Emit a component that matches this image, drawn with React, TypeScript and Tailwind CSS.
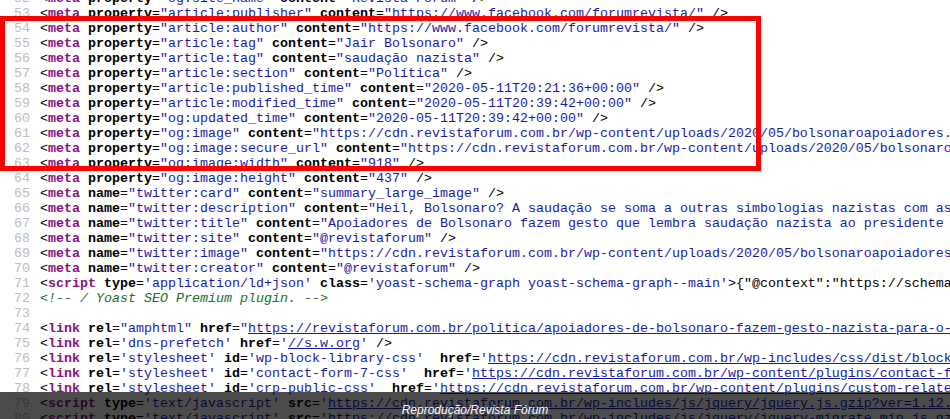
type Kind = 'p' | 't' | 'a' | 'v' | 'l' | 'c';
type Seg = [string, Kind];
type Attr = { k: string; v: string; link?: boolean; gap?: string };

const styles: Record<Kind, string> = {
  p: 'text-black',
  t: 'font-bold text-[#881280]',
  a: 'font-bold text-black',
  v: 'text-[#1a1aa6]',
  l: 'text-[#1a1aa6] underline',
  c: 'italic text-[#236e25]',
};

function tag(name: string, attrs: Attr[], q: string, end: Seg[] = [[' />', 'p']]): Seg[] {
  const out: Seg[] = [['<', 'p'], [name, 't']];
  attrs.forEach((a) => {
    out.push([a.gap ?? ' ', 'p'], [a.k, 'a'], ['=', 'p']);
    if (a.link) {
      out.push([q, 'v'], [a.v, 'l'], [q, 'v']);
    } else {
      out.push([q + a.v + q, 'v']);
    }
  });
  return out.concat(end);
}

const meta = (key: string, name: string, content: string) =>
  tag('meta', [{ k: key, v: name }, { k: 'content', v: content }], '"');

const cdn = 'https://cdn.revistaforum.com.br';
const scriptEnd: Seg[] = [['>', 'p'], ['</', 'p'], ['script', 't'], ['>', 'p']];

const lines: Seg[][] = [
  meta('property', 'og:site_name', 'Revista Fórum'),
  meta('property', 'article:publisher', 'https://www.facebook.com/forumrevista/'),
  meta('property', 'article:author', 'https://www.facebook.com/forumrevista/'),
  meta('property', 'article:tag', 'Jair Bolsonaro'),
  meta('property', 'article:tag', 'saudação nazista'),
  meta('property', 'article:section', 'Política'),
  meta('property', 'article:published_time', '2020-05-11T20:21:36+00:00'),
  meta('property', 'article:modified_time', '2020-05-11T20:39:42+00:00'),
  meta('property', 'og:updated_time', '2020-05-11T20:39:42+00:00'),
  meta('property', 'og:image', `${cdn}/wp-content/uploads/2020/05/bolsonaroapoiadores.jpg`),
  meta('property', 'og:image:secure_url', `${cdn}/wp-content/uploads/2020/05/bolsonaroapoiadores.jpg`),
  meta('property', 'og:image:width', '918'),
  meta('property', 'og:image:height', '437'),
  meta('name', 'twitter:card', 'summary_large_image'),
  meta(
    'name',
    'twitter:description',
    'Heil, Bolsonaro? A saudação se soma a outras simbologias nazistas com as quais o governo flerta',
  ),
  meta(
    'name',
    'twitter:title',
    'Apoiadores de Bolsonaro fazem gesto que lembra saudação nazista ao presidente em ato em Brasília',
  ),
  meta('name', 'twitter:site', '@revistaforum'),
  meta('name', 'twitter:image', `${cdn}/wp-content/uploads/2020/05/bolsonaroapoiadores.jpg`),
  meta('name', 'twitter:creator', '@revistaforum'),
  tag(
    'script',
    [
      { k: 'type', v: 'application/ld+json' },
      { k: 'class', v: 'yoast-schema-graph yoast-schema-graph--main' },
    ],
    "'",
    [
      ['>', 'p'],
      ['{"@context":"https://schema.org","@graph":[{"@type":"Organization"', 'p'],
    ],
  ),
  [['<!-- / Yoast SEO Premium plugin. -->', 'c']],
  [],
  tag(
    'link',
    [
      { k: 'rel', v: 'amphtml' },
      {
        k: 'href',
        v: 'https://revistaforum.com.br/politica/apoiadores-de-bolsonaro-fazem-gesto-nazista-para-o-presidente/amp/',
        link: true,
      },
    ],
    '"',
  ),
  tag('link', [{ k: 'rel', v: 'dns-prefetch' }, { k: 'href', v: '//s.w.org', link: true }], "'"),
  tag(
    'link',
    [
      { k: 'rel', v: 'stylesheet' },
      { k: 'id', v: 'wp-block-library-css' },
      { k: 'href', v: `${cdn}/wp-includes/css/dist/block-library/style.min.css?ver=5.4.1`, link: true, gap: '  ' },
    ],
    "'",
  ),
  tag(
    'link',
    [
      { k: 'rel', v: 'stylesheet' },
      { k: 'id', v: 'contact-form-7-css' },
      { k: 'href', v: `${cdn}/wp-content/plugins/contact-form-7/includes/css/styles.css?ver=5.1.7`, link: true, gap: '  ' },
    ],
    "'",
  ),
  tag(
    'link',
    [
      { k: 'rel', v: 'stylesheet' },
      { k: 'id', v: 'crp-public-css' },
      { k: 'href', v: `${cdn}/wp-content/plugins/custom-related-posts/dist/public.css?ver=1.6.2`, link: true, gap: '  ' },
    ],
    "'",
  ),
  tag(
    'script',
    [
      { k: 'type', v: 'text/javascript' },
      { k: 'src', v: `${cdn}/wp-includes/js/jquery/jquery.js.gzip?ver=1.12.4-wp`, link: true },
    ],
    "'",
    scriptEnd,
  ),
  tag(
    'script',
    [
      { k: 'type', v: 'text/javascript' },
      { k: 'src', v: `${cdn}/wp-includes/js/jquery/jquery-migrate.min.js.gzip?ver=1.4.1`, link: true },
    ],
    "'",
    scriptEnd,
  ),
];

export default function App() {
  return (
    <main className="relative h-[419px] w-[950px] overflow-hidden bg-white">
      <pre className="-mt-[9px] font-['Liberation_Mono','Courier_New',monospace] text-[13.33px] leading-[15px]">
        {lines.map((segs, i) => (
          <div key={i} className="flex whitespace-pre">
            <span className="w-[30px] shrink-0 text-right text-[#bdbdbd]">{52 + i}</span>
            <span className="ml-[10px]">
              {segs.map(([text, kind], j) => (
                <span key={j} className={styles[kind]}>
                  {text}
                </span>
              ))}
            </span>
          </div>
        ))}
      </pre>

      {/* highlight box */}
      <div className="absolute left-0 top-[16px] h-[155px] w-[761px] border-[5px] border-[#ff0000]" />

      {/* photo credit */}
      <div className="absolute inset-x-0 bottom-0 h-[27px] bg-black/70 pt-[11px] text-center font-['Liberation_Sans',Arial,sans-serif] text-[12px] italic leading-[14px] text-white">
        Reprodução/Revista Fórum
      </div>
    </main>
  );
}
